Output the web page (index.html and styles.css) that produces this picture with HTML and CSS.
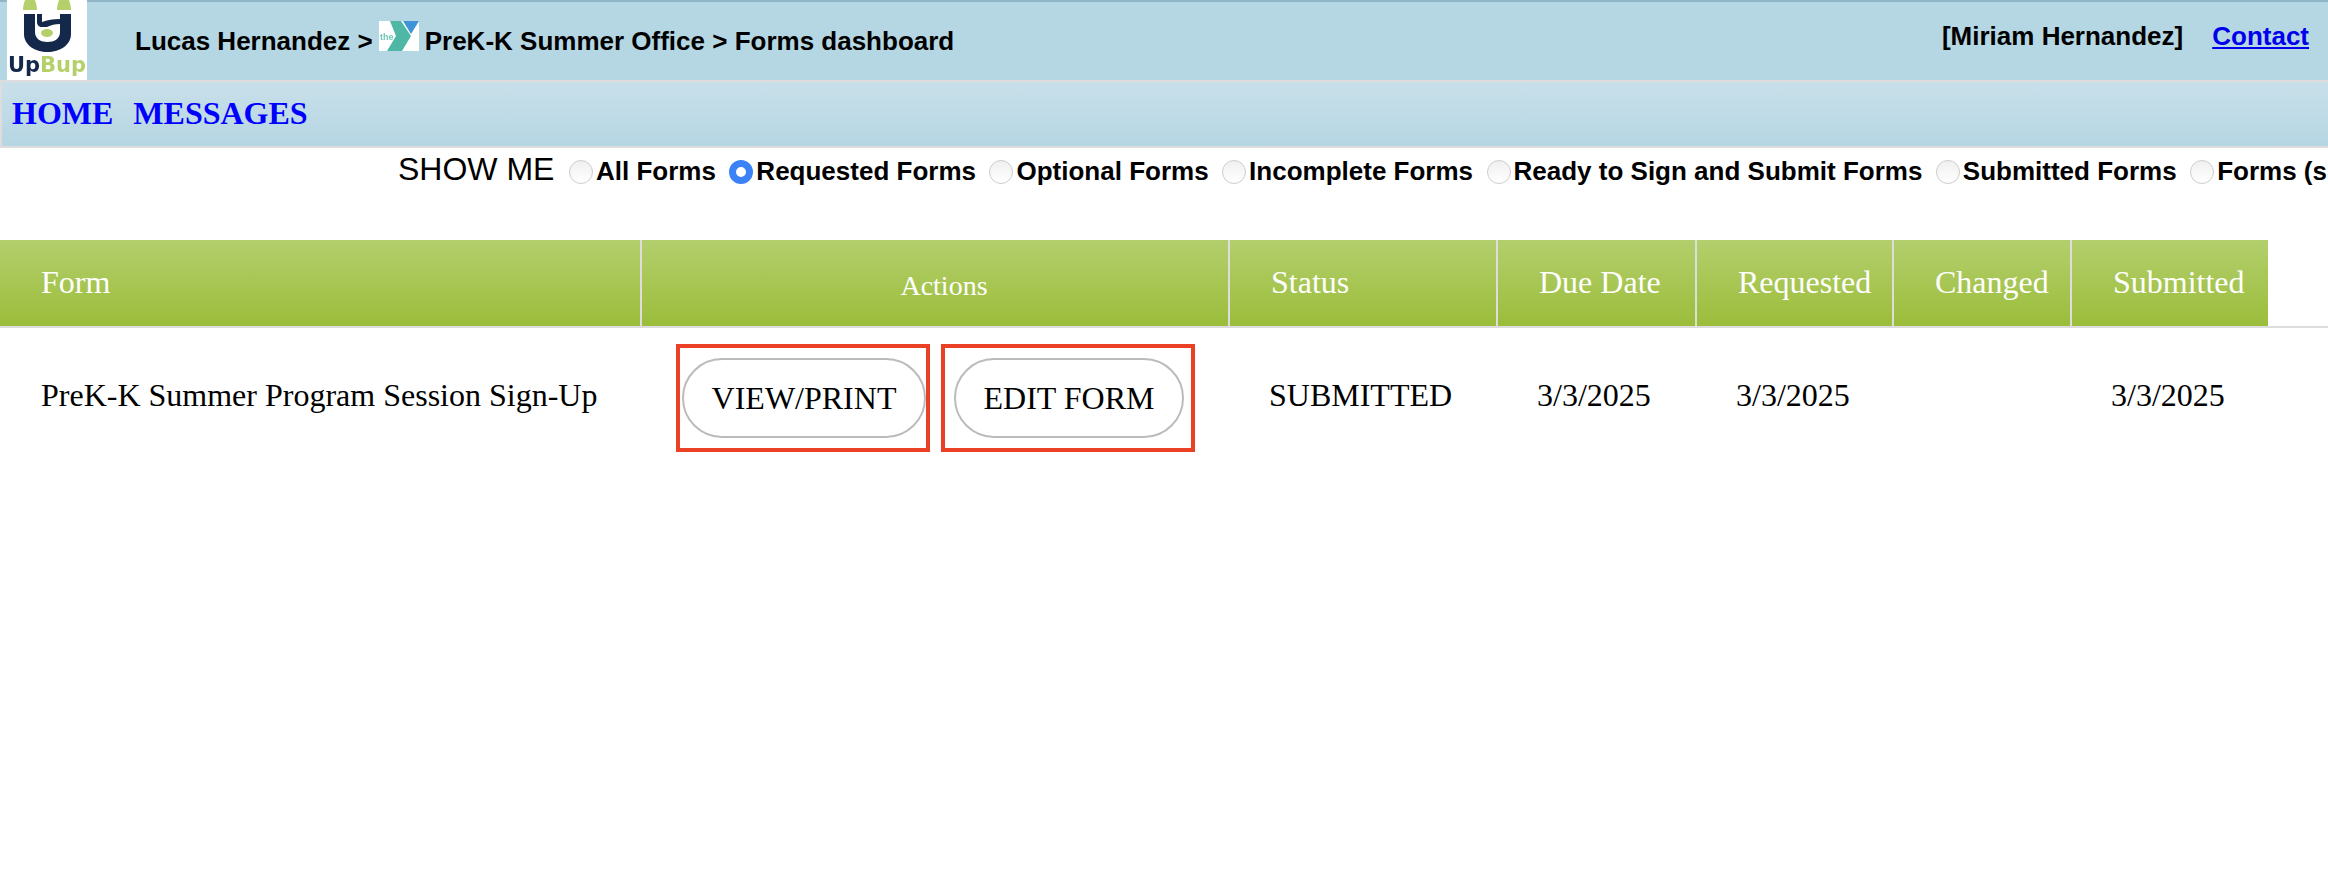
FILE: index.html
```html
<!DOCTYPE html>
<html lang="en">
<head>
  <meta charset="UTF-8">
  <title>Forms dashboard</title>
  <link rel="stylesheet" href="styles.css">
</head>
<body>

  <!-- Top Bar -->
  <header class="top-bar">
    <svg class="logo" viewBox="0 0 80 80" role="img" aria-label="UpBup">
      <rect width="80" height="80" fill="#ffffff"/>
      <path d="M18 0h10c1 3 2 6 2 10H16c0-4 1-7 2-10zM52 0h10c1 3 2 6 2 10H50c0-4 1-7 2-10z" fill="#b5d06a"/>
      <path d="M17 14h11v18c0 7 6 10 12.500 10s12.500-3 12.500-10V14h11v20c0 11-11 18-23.500 18S17 45 17 34z" fill="#14284b"/>
      <path d="M30 14h5v8c5-2 11-3 18-3v5c-5 0-9 1-13 3h-5c-3 0-5-2-5-5z" fill="#14284b"/>
      <ellipse cx="40" cy="33" rx="6" ry="4" fill="#b5d06a"/>
      <text class="logo-text" x="1" y="72" textLength="78" lengthAdjust="spacingAndGlyphs"><tspan fill="#14284b">Up</tspan><tspan fill="#b5d06a">Bup</tspan></text>
    </svg>
    <div class="crumbs">
      <span>Lucas Hernandez &gt;</span>
      <svg class="org-logo" viewBox="0 0 40 30" role="img" aria-label="the Y">
        <rect width="40" height="30" fill="#ffffff"/>
        <path d="M11 0h11l10 15-9 15H8l9-15z" fill="#4fb7a6"/>
        <path d="M24 0h16l-8 13z" fill="#3f94d8"/>
        <text class="org-text" x="1" y="19">the</text>
      </svg>
      <span>PreK-K Summer Office &gt; Forms dashboard</span>
    </div>
    <div class="user-box">
      <span>[Miriam Hernandez]</span>
      <a href="#">Contact</a>
    </div>
  </header>

  <!-- Navigation Bar -->
  <nav class="main-nav">
    <a href="#">HOME</a>
    <a href="#">MESSAGES</a>
  </nav>

  <!-- Filter Row -->
  <div class="filter-row">
    <span class="filter-title">SHOW ME</span>
    <label><input type="radio" name="show">All Forms</label>
    <label><input type="radio" name="show" checked>Requested Forms</label>
    <label><input type="radio" name="show">Optional Forms</label>
    <label><input type="radio" name="show">Incomplete Forms</label>
    <label><input type="radio" name="show">Ready to Sign and Submit Forms</label>
    <label><input type="radio" name="show">Submitted Forms</label>
    <label><input type="radio" name="show">Forms (submitted)</label>
  </div>

  <!-- Forms Table -->
  <div class="forms-head">
    <div class="forms-cols head-cells">
      <div class="head-cell">Form</div>
      <div class="head-cell head-actions">Actions</div>
      <div class="head-cell">Status</div>
      <div class="head-cell">Due Date</div>
      <div class="head-cell">Requested</div>
      <div class="head-cell">Changed</div>
      <div class="head-cell">Submitted</div>
    </div>
  </div>
  <div class="forms-cols form-row">
    <div class="row-cell">PreK-K Summer Program Session Sign-Up</div>
    <div class="row-actions">
      <div class="mark"><button class="pill pill-view">VIEW/PRINT</button></div>
      <div class="mark"><button class="pill pill-edit">EDIT FORM</button></div>
    </div>
    <div class="row-cell row-status">SUBMITTED</div>
    <div class="row-cell row-date">3/3/2025</div>
    <div class="row-cell row-date">3/3/2025</div>
    <div class="row-cell"></div>
    <div class="row-cell row-date">3/3/2025</div>
  </div>

</body>
</html>
```
FILE: styles.css
```css
/* Basic Reset */
* {
  margin: 0;
  padding: 0;
  box-sizing: border-box;
}

html, body {
  height: 100%;
  overflow: hidden;
}

body {
  font-family: 'Liberation Serif', serif;
  background-color: #ffffff;
  color: #000000;
}

/* Top Bar */
.top-bar {
  height: 80px;
  background-color: #b5d6e3;
  border-top: 2px solid #8fb5c6;
  display: flex;
  align-items: flex-start;
  padding-left: 7px;
  font-family: 'Liberation Sans', sans-serif;
  font-weight: bold;
  font-size: 26px;
}

.logo {
  width: 80px;
  height: 80px;
  margin-top: -2px;
  flex: none;
  filter: blur(0.5px);
}

.logo-text {
  font-family: 'DejaVu Sans', sans-serif;
  font-size: 21px;
  font-weight: bold;
}

.crumbs {
  display: flex;
  align-items: center;
  gap: 6px;
  margin-left: 48px;
  margin-top: 24px;
}

.org-logo {
  width: 40px;
  height: 30px;
  margin-top: -12px;
  filter: blur(0.5px);
}

.org-text {
  font-family: 'Liberation Sans', sans-serif;
  font-size: 9px;
  font-weight: bold;
  fill: #6cc7b8;
}

.user-box {
  margin-left: auto;
  margin-top: 19px;
  padding-right: 19px;
  display: flex;
  gap: 29px;
}

.user-box a {
  color: #0000ee;
}

/* Navigation Menu */
.main-nav {
  height: 68px;
  border: 2px solid #dddddd;
  border-right: none;
  background: linear-gradient(#c9e0ea, #b5d6e3);
  display: flex;
  align-items: center;
  gap: 20px;
  padding-left: 10px;
  padding-bottom: 2px;
}

.main-nav a {
  color: #0000ff;
  font-size: 32px;
  font-weight: bold;
  text-decoration: none;
}

/* Filter Row */
.filter-row {
  height: 92px;
  padding: 3px 0 0 398px;
  display: flex;
  align-items: flex-start;
  gap: 13.5px;
  white-space: nowrap;
  overflow: hidden;
  font-family: 'Liberation Sans', sans-serif;
  font-size: 26px;
  font-weight: bold;
}

.filter-title {
  font-size: 32px;
  font-weight: normal;
  margin-right: 1px;
}

.filter-row label {
  display: flex;
  align-items: center;
  height: 36px;
  margin-top: 2px;
}

.filter-row input {
  appearance: none;
  width: 24px;
  height: 24px;
  margin-top: 2px;
  margin-right: 3px;
  border: 1px solid #cccccc;
  border-radius: 50%;
  background: linear-gradient(#f0f0f0, #ffffff);
}

.filter-row input:checked {
  border: 7px solid #3b82f6;
  background: #ffffff;
}

/* Forms Table */
.forms-cols {
  display: grid;
  grid-template-columns: 642px 588px 268px 199px 197px 178px 196px;
}

.forms-head {
  border-bottom: 2px solid #dddddd;
}

.head-cells {
  width: 2268px;
  height: 86px;
  background: linear-gradient(#b3cf6d, #9bbd3a);
}

.head-cell {
  color: #ffffff;
  font-size: 32px;
  padding: 24px 0 0 41px;
  border-right: 2px solid #dddddd;
}

.head-cell:last-child {
  border-right: none;
}

.head-actions {
  font-size: 28px;
  padding: 30px 0 0 18px;
  text-align: center;
}

.form-row {
  width: 2268px;
  margin-top: 16px;
  font-size: 32px;
}

.row-cell {
  padding: 33px 0 0 41px;
}

.row-status {
  padding-left: 39px;
}

.row-date {
  padding-left: 39px;
}

.row-actions {
  display: flex;
  gap: 11px;
  padding-left: 34px;
}

.mark {
  border: 4px solid #ea4025;
  padding: 10px 1px;
}

.pill {
  display: block;
  height: 80px;
  background-color: #ffffff;
  border: 2px solid #bbbbbb;
  border-radius: 40px;
  font-family: 'Liberation Serif', serif;
  font-size: 32px;
  color: #000000;
}

.pill-view {
  width: 244px;
  margin: 0 -1px 0 1px;
}

.pill-edit {
  width: 230px;
  margin: 0 6px 0 8px;
}
```
